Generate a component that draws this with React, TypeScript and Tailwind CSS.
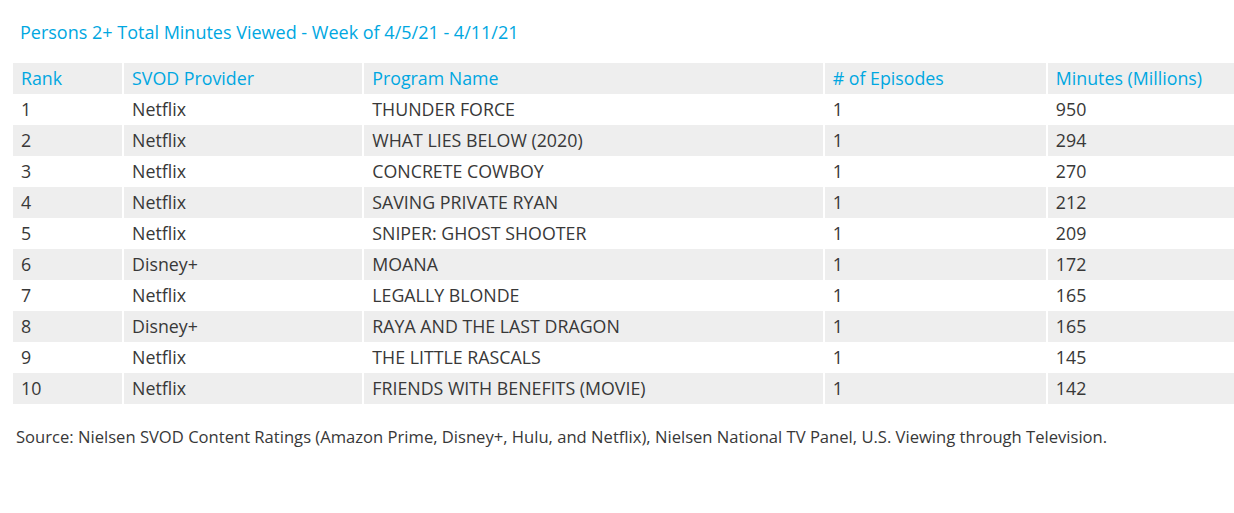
const rows = [
  ["1", "Netflix", "THUNDER FORCE", "1", "950"],
  ["2", "Netflix", "WHAT LIES BELOW (2020)", "1", "294"],
  ["3", "Netflix", "CONCRETE COWBOY", "1", "270"],
  ["4", "Netflix", "SAVING PRIVATE RYAN", "1", "212"],
  ["5", "Netflix", "SNIPER: GHOST SHOOTER", "1", "209"],
  ["6", "Disney+", "MOANA", "1", "172"],
  ["7", "Netflix", "LEGALLY BLONDE", "1", "165"],
  ["8", "Disney+", "RAYA AND THE LAST DRAGON", "1", "165"],
  ["9", "Netflix", "THE LITTLE RASCALS", "1", "145"],
  ["10", "Netflix", "FRIENDS WITH BENEFITS (MOVIE)", "1", "142"],
];

const headers = ["Rank", "SVOD Provider", "Program Name", "# of Episodes", "Minutes (Millions)"];
const widths = ["w-[110px]", "w-[240px]", "w-[460px]", "w-[223px]", "w-[187px]"];

export default function App() {
  return (
    <div className="bg-white min-h-[513px] w-[1234px] font-['Open_Sans',sans-serif] text-[#383838]">
      <div className="pl-[20px] pt-[20px] text-[18px] leading-[24px] text-[#00a7e1]">
        Persons 2+ Total Minutes Viewed - Week of 4/5/21 - 4/11/21
      </div>
      <table className="ml-[13px] mt-[19px] w-[1221px] table-fixed border-collapse text-[17.8px]">
        <thead>
          <tr className="bg-[#eeeeee] text-[#00a7e1]">
            {headers.map((h, i) => (
              <th
                key={h}
                className={`${widths[i]} h-[31px] px-[8px] text-left font-normal ${i > 0 ? "border-l-2 border-white" : ""}`}
              >
                {h}
              </th>
            ))}
          </tr>
        </thead>
        <tbody>
          {rows.map((r, ri) => (
            <tr key={r[0]} className={ri % 2 === 1 ? "bg-[#eeeeee]" : "bg-white"}>
              {r.map((c, i) => (
                <td
                  key={i}
                  className={`h-[31px] px-[8px] ${i > 0 ? "border-l-2 border-white" : ""}`}
                >
                  {c}
                </td>
              ))}
            </tr>
          ))}
        </tbody>
      </table>
      <div className="pl-[16px] pt-[22px] text-[16.6px] leading-[22px]">
        Source: Nielsen SVOD Content Ratings (Amazon Prime, Disney+, Hulu, and Netflix), Nielsen National TV Panel, U.S. Viewing through Television.
      </div>
    </div>
  );
}
